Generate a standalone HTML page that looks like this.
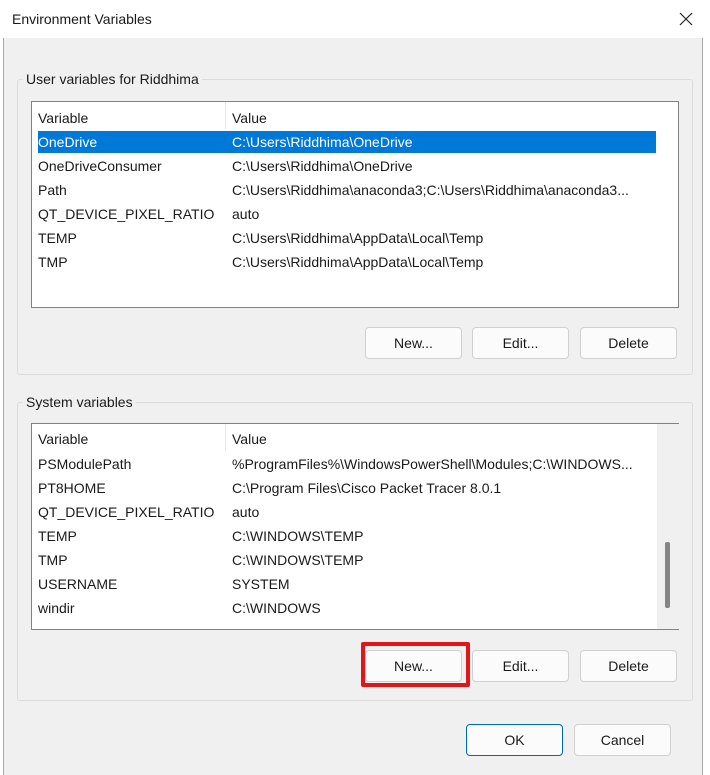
<!DOCTYPE html>
<html><head><style>
*{margin:0;padding:0;box-sizing:border-box}
body{width:710px;height:775px;background:#fff;font-family:"Liberation Sans",sans-serif;font-size:14px;color:#1a1a1a;position:relative;overflow:hidden}
.a{position:absolute}
.win{left:3px;top:0;width:700px;height:775px;background:#f0f0f0;border-left:1px solid #aaa;border-right:1px solid #aaa}
.title{left:3px;top:0;width:700px;height:38px;background:#fff}
.grp{border:1px solid #dcdcdc;border-radius:3px}
.lbl{background:#f0f0f0;padding:0 3px;line-height:16px}
.list{background:#fff;border:1px solid #828282}
.row{position:absolute;left:6px;height:22px;line-height:22px;width:618px}
.row span{position:absolute;white-space:nowrap}
.row .v{left:0}.row .w{left:194px}
.sel{background:#0078d7;color:#fff}
.btn{position:absolute;height:32px;width:97px;background:#fbfbfb;border:1px solid #d0d0d0;border-radius:4px;text-align:center;line-height:30px}
.hdrsep{position:absolute;left:193px;top:0;width:1px;height:27px;background:#e5e5e5}
</style></head><body>
<div class="a win"></div>
<div class="a title"></div>
<div class="a" style="left:12px;top:11px;font-size:14px">Environment Variables</div>
<svg class="a" style="left:679px;top:12px" width="14" height="14"><path d="M1 1L13 13M13 1L1 13" stroke="#222" stroke-width="1.2"/></svg>

<div class="a grp" style="left:17px;top:79px;width:676px;height:296px"></div>
<div class="a lbl" style="left:23px;top:71px">User variables for Riddhima</div>
<div class="a list" style="left:31px;top:101px;width:648px;height:207px">
 <div class="hdrsep"></div>
 <div class="row" style="top:5px"><span class="v">Variable</span><span class="w">Value</span></div>
 <div class="row sel" style="top:29px"><span class="v">OneDrive</span><span class="w">C:\Users\Riddhima\OneDrive</span></div>
 <div class="row" style="top:53px"><span class="v">OneDriveConsumer</span><span class="w">C:\Users\Riddhima\OneDrive</span></div>
 <div class="row" style="top:77px"><span class="v">Path</span><span class="w">C:\Users\Riddhima\anaconda3;C:\Users\Riddhima\anaconda3...</span></div>
 <div class="row" style="top:101px"><span class="v">QT_DEVICE_PIXEL_RATIO</span><span class="w">auto</span></div>
 <div class="row" style="top:125px"><span class="v">TEMP</span><span class="w">C:\Users\Riddhima\AppData\Local\Temp</span></div>
 <div class="row" style="top:149px"><span class="v">TMP</span><span class="w">C:\Users\Riddhima\AppData\Local\Temp</span></div>
</div>
<div class="btn" style="left:365px;top:327px">New...</div>
<div class="btn" style="left:472px;top:327px">Edit...</div>
<div class="btn" style="left:580px;top:327px">Delete</div>

<div class="a grp" style="left:17px;top:402px;width:676px;height:299px"></div>
<div class="a lbl" style="left:23px;top:394px">System variables</div>
<div class="a list" style="left:31px;top:423px;width:648px;height:207px">
 <div class="hdrsep"></div>
 <div class="a" style="left:625px;top:0;width:22px;height:205px;background:#f0f0f0"></div>
 <div class="a" style="left:633px;top:118px;width:5px;height:66px;background:#858585;border-radius:2px"></div>
 <div class="row" style="top:4px"><span class="v">Variable</span><span class="w">Value</span></div>
 <div class="row" style="top:29px"><span class="v">PSModulePath</span><span class="w">%ProgramFiles%\WindowsPowerShell\Modules;C:\WINDOWS...</span></div>
 <div class="row" style="top:53px"><span class="v">PT8HOME</span><span class="w">C:\Program Files\Cisco Packet Tracer 8.0.1</span></div>
 <div class="row" style="top:77px"><span class="v">QT_DEVICE_PIXEL_RATIO</span><span class="w">auto</span></div>
 <div class="row" style="top:101px"><span class="v">TEMP</span><span class="w">C:\WINDOWS\TEMP</span></div>
 <div class="row" style="top:125px"><span class="v">TMP</span><span class="w">C:\WINDOWS\TEMP</span></div>
 <div class="row" style="top:149px"><span class="v">USERNAME</span><span class="w">SYSTEM</span></div>
 <div class="row" style="top:173px"><span class="v">windir</span><span class="w">C:\WINDOWS</span></div>
</div>
<div class="btn" style="left:365px;top:650px">New...</div>
<div class="a" style="left:361px;top:642px;width:109px;height:45px;border:4px solid #e0161b;border-radius:2px"></div>
<div class="btn" style="left:472px;top:650px">Edit...</div>
<div class="btn" style="left:580px;top:650px">Delete</div>

<div class="btn" style="left:466px;top:724px;border-color:#0067c0;">OK</div>
<div class="btn" style="left:574px;top:724px">Cancel</div>
</body></html>
